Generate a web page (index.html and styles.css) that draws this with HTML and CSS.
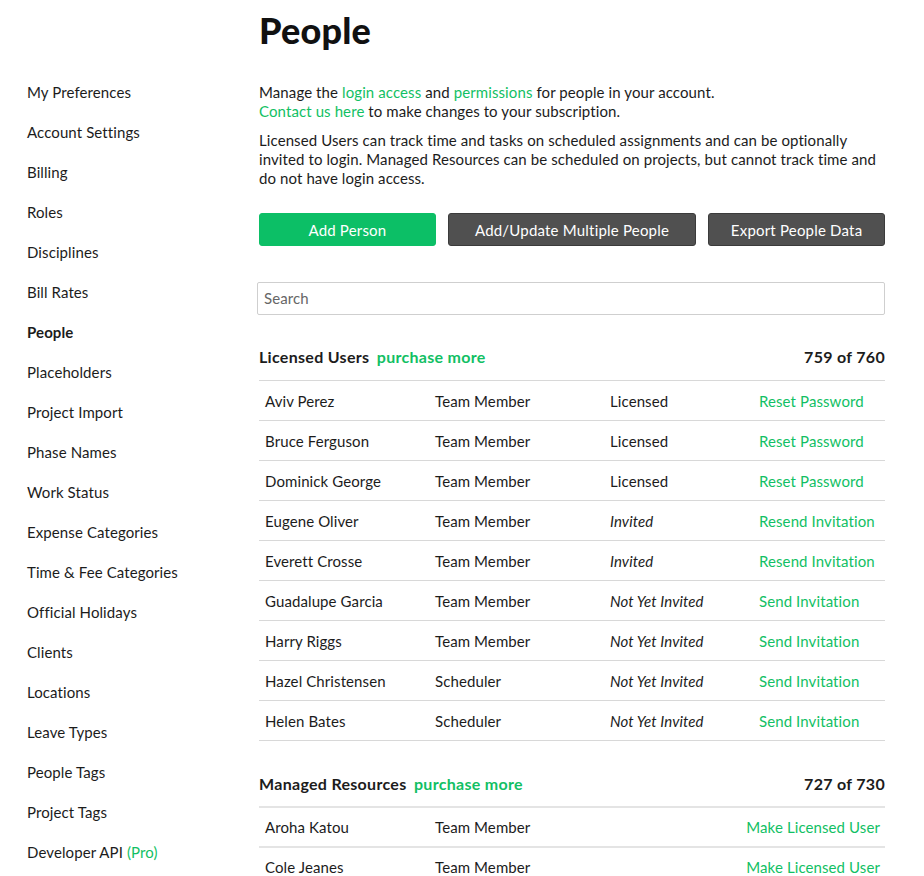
FILE: index.html
```html
<!DOCTYPE html>
<html>
<head>
<meta charset="utf-8">
<link rel="stylesheet" href="styles.css">
</head>
<body>
<div class="page">
  <nav class="sidebar">
    <a class="nav-item">My Preferences</a>
    <a class="nav-item">Account Settings</a>
    <a class="nav-item">Billing</a>
    <a class="nav-item">Roles</a>
    <a class="nav-item">Disciplines</a>
    <a class="nav-item">Bill Rates</a>
    <a class="nav-item active">People</a>
    <a class="nav-item">Placeholders</a>
    <a class="nav-item">Project Import</a>
    <a class="nav-item">Phase Names</a>
    <a class="nav-item">Work Status</a>
    <a class="nav-item">Expense Categories</a>
    <a class="nav-item">Time &amp; Fee Categories</a>
    <a class="nav-item">Official Holidays</a>
    <a class="nav-item">Clients</a>
    <a class="nav-item">Locations</a>
    <a class="nav-item">Leave Types</a>
    <a class="nav-item">People Tags</a>
    <a class="nav-item">Project Tags</a>
    <a class="nav-item">Developer API <span class="green">(Pro)</span></a>
  </nav>
  <main class="main">
    <h1 class="title">People</h1>
    <p class="intro">Manage the <a class="green">login access</a> and <a class="green">permissions</a> for people in your account.<br><a class="green">Contact us here</a> to make changes to your subscription.</p>
    <p class="intro second">Licensed Users can track time and tasks on scheduled assignments and can be optionally invited to login. Managed Resources can be scheduled on projects, but cannot track time and do not have login access.</p>
    <div class="actions">
      <button class="btn btn-green">Add Person</button>
      <button class="btn btn-dark wide">Add/Update Multiple People</button>
      <button class="btn btn-dark">Export People Data</button>
    </div>
    <div class="search">Search</div>

    <div class="section-head">
      <div><span class="bold">Licensed Users</span> <a class="green bold more">purchase more</a></div>
      <div class="bold">759 of 760</div>
    </div>
    <div class="table">
      <div class="row"><span class="c-name">Aviv Perez</span><span class="c-role">Team Member</span><span class="c-status">Licensed</span><a class="c-act green">Reset Password</a></div>
      <div class="row"><span class="c-name">Bruce Ferguson</span><span class="c-role">Team Member</span><span class="c-status">Licensed</span><a class="c-act green">Reset Password</a></div>
      <div class="row"><span class="c-name">Dominick George</span><span class="c-role">Team Member</span><span class="c-status">Licensed</span><a class="c-act green">Reset Password</a></div>
      <div class="row"><span class="c-name">Eugene Oliver</span><span class="c-role">Team Member</span><span class="c-status it">Invited</span><a class="c-act green">Resend Invitation</a></div>
      <div class="row"><span class="c-name">Everett Crosse</span><span class="c-role">Team Member</span><span class="c-status it">Invited</span><a class="c-act green">Resend Invitation</a></div>
      <div class="row"><span class="c-name">Guadalupe Garcia</span><span class="c-role">Team Member</span><span class="c-status it">Not Yet Invited</span><a class="c-act green">Send Invitation</a></div>
      <div class="row"><span class="c-name">Harry Riggs</span><span class="c-role">Team Member</span><span class="c-status it">Not Yet Invited</span><a class="c-act green">Send Invitation</a></div>
      <div class="row"><span class="c-name">Hazel Christensen</span><span class="c-role">Scheduler</span><span class="c-status it">Not Yet Invited</span><a class="c-act green">Send Invitation</a></div>
      <div class="row"><span class="c-name">Helen Bates</span><span class="c-role">Scheduler</span><span class="c-status it">Not Yet Invited</span><a class="c-act green">Send Invitation</a></div>
    </div>

    <div class="section-head managed">
      <div><span class="bold">Managed Resources</span> <a class="green bold more">purchase more</a></div>
      <div class="bold">727 of 730</div>
    </div>
    <div class="table">
      <div class="row"><span class="c-name">Aroha Katou</span><span class="c-role">Team Member</span><a class="c-right green">Make Licensed User</a></div>
      <div class="row"><span class="c-name">Cole Jeanes</span><span class="c-role">Team Member</span><a class="c-right green">Make Licensed User</a></div>
    </div>
  </main>
</div>
</body>
</html>
```

FILE: styles.css
```css
* { box-sizing: border-box; }
html, body { margin: 0; padding: 0; background: #fff; }
body {
  font-family: Lato, "Open Sans", sans-serif;
  font-size: 15px;
  letter-spacing: 0.1px;
  color: #1c1c1c;
  overflow: hidden;
}
.page {
  display: flex;
  width: 924px;
}
.sidebar {
  width: 259px;
  flex: none;
  padding: 72px 0 0 27px;
  display: flex;
  flex-direction: column;
}
.nav-item {
  display: block;
  height: 40px;
  line-height: 40px;
  color: #1c1c1c;
  white-space: nowrap;
}
.nav-item.active { font-weight: 700; }
.green { color: #12bf64; text-decoration: none; }
.bold { font-weight: 700; }
.main {
  width: 626px;
  flex: none;
}
.title {
  margin: 0;
  font-size: 36px;
  font-weight: 900;
  line-height: 40px;
  padding-top: 10px;
  color: #111;
  letter-spacing: 0.2px;
}
.intro {
  margin: 33px 0 0;
  line-height: 19px;
}
.intro.second { margin-top: 10px; }
.actions {
  display: flex;
  margin-top: 25px;
  gap: 12px;
}
.btn {
  height: 33px;
  border-radius: 3px;
  font-family: inherit;
  font-size: 15px;
  letter-spacing: 0.2px;
  color: #fff;
  border: 1px solid transparent;
  width: 178px;
  padding: 0;
}
.btn.wide { width: 250px; }
.btn-green { background: #0cbf66; border-color: #0cbf66; }
.btn-dark { background: #505050; border-color: #3b3b3b; }
.search {
  margin: 36px 0 0 -2px;
  width: 628px;
  height: 33px;
  border: 1px solid #cfcfcf;
  border-radius: 2px;
  padding-left: 6px;
  line-height: 31px;
  color: #666;
}
.section-head {
  display: flex;
  justify-content: space-between;
  align-items: center;
  height: 66px;
  padding-top: 20px;
  padding-bottom: 2px;
  border-bottom: 1px solid #d8d8d8;
  font-size: 16px;
  letter-spacing: 0.3px;
}
.section-head.managed {
  height: 67px;
  padding-top: 20px;
  padding-bottom: 0;
  border-bottom: 2px solid #e4e4e4;
}
.more { margin-left: 3px; }
.table { width: 626px; }
.row {
  display: flex;
  align-items: center;
  height: 40px;
  border-bottom: 1px solid #d8d8d8;
  padding-left: 6px;
  white-space: nowrap;
}
.table:last-child .row { border-bottom: 2px solid #e4e4e4; }
.c-name { width: 170px; }
.c-role { width: 175px; }
.c-status { width: 149px; }
.it { font-style: italic; }
.c-right { margin-left: auto; padding-right: 5px; }
```
